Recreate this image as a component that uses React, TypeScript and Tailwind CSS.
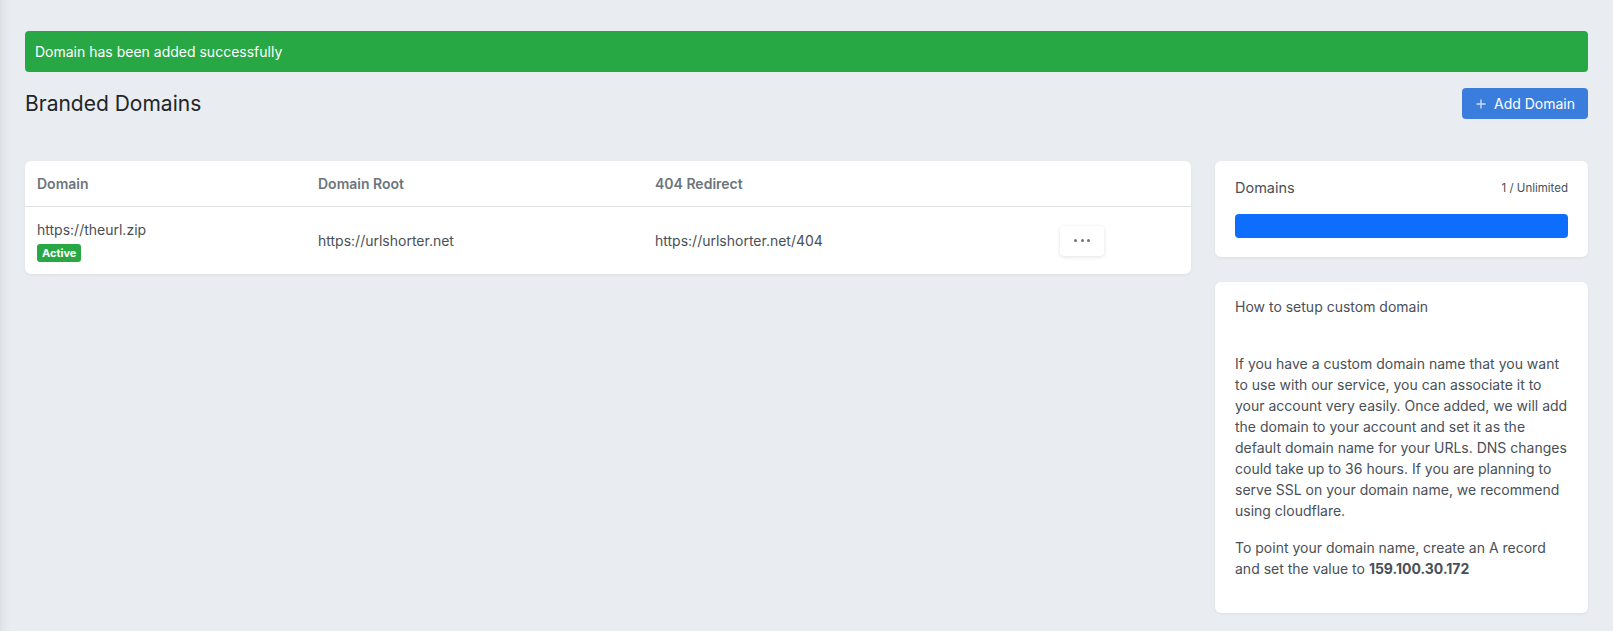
export default function App() {
  return (
    <div className="min-h-[631px] bg-[#e9ecf0] px-[25px] pt-[31px] pb-[18px] font-['Inter',sans-serif] text-[14px] leading-[21px] text-[#495057] shadow-[inset_12px_0_12px_-12px_rgba(0,0,0,0.10)]">
      <div className="rounded-[4px] bg-[#28a745] px-[10px] py-[10px] text-white">
        Domain has been added successfully
      </div>

      <div className="mt-[16px] flex items-center justify-between">
        <h1 className="text-[21px] font-normal leading-[30px] text-[#212529]">Branded Domains</h1>
        <button className="flex h-[31px] items-center gap-[8px] rounded-[4px] bg-[#3b7ddd] pl-[14px] pr-[13px] text-[14px] leading-[21px] text-white">
          <svg width="10" height="10" viewBox="0 0 10 10" fill="none" stroke="rgba(255,255,255,0.75)" strokeWidth="1.4">
            <path d="M5 0.5V9.5M0.5 5H9.5" />
          </svg>
          Add Domain
        </button>
      </div>

      <div className="mt-[42px] flex items-start gap-[24px]">
        <div className="w-[1166px] rounded-[6px] bg-white shadow-[0_1px_3px_rgba(0,0,0,0.06)]">
          <table className="w-full table-fixed border-collapse text-left">
            <colgroup>
              <col className="w-[281px]" />
              <col className="w-[337px]" />
              <col className="w-[405px]" />
              <col className="w-[143px]" />
            </colgroup>
            <thead>
              <tr className="border-b border-[#dee2e6]">
                <th className="px-[12px] py-[12px] font-semibold text-[#6c757d]">Domain</th>
                <th className="px-[12px] py-[12px] font-semibold text-[#6c757d]">Domain Root</th>
                <th className="px-[12px] py-[12px] font-semibold text-[#6c757d]">404 Redirect</th>
                <th className="px-[12px] py-[12px]"></th>
              </tr>
            </thead>
            <tbody>
              <tr>
                <td className="px-[12px] py-[12px] align-middle">
                  <div className="flex flex-col items-start gap-[4px]">
                    <span>https://theurl.zip</span>
                    <span className="h-[18px] rounded-[3px] bg-[#28a745] px-[5px] text-[11px] font-bold leading-[18px] text-white">
                      Active
                    </span>
                  </div>
                </td>
                <td className="px-[12px] py-[12px] align-middle">https://urlshorter.net</td>
                <td className="px-[12px] py-[12px] align-middle">https://urlshorter.net/404</td>
                <td className="px-[12px] py-[12px] align-middle">
                  <button className="flex h-[30px] w-[44px] items-center justify-center gap-[3.5px] rounded-[4px] bg-white shadow-[0_1px_4px_rgba(0,0,0,0.12)]">
                    <span className="h-[3px] w-[3px] rounded-full bg-[#6c757d]" />
                    <span className="h-[3px] w-[3px] rounded-full bg-[#6c757d]" />
                    <span className="h-[3px] w-[3px] rounded-full bg-[#6c757d]" />
                  </button>
                </td>
              </tr>
            </tbody>
          </table>
        </div>

        <div className="flex w-[373px] flex-col gap-[25px]">
          <div className="rounded-[6px] bg-white px-[20px] pt-[16px] pb-[19px] shadow-[0_1px_3px_rgba(0,0,0,0.06)]">
            <div className="flex items-center justify-between">
              <span className="text-[14.5px] leading-[22px]">Domains</span>
              <span className="text-[11.5px] leading-[18px]">1 / Unlimited</span>
            </div>
            <div className="mt-[15px] h-[24px] rounded-[4px] bg-[#0d6efd]" />
          </div>

          <div className="rounded-[6px] bg-white px-[20px] pt-[14px] pb-[18px] shadow-[0_1px_3px_rgba(0,0,0,0.06)]">
            <div>How to setup custom domain</div>
            <div className="mt-[36px]">
              <p className="mb-[16px]">
                If you have a custom domain name that you want to use with our service, you can associate it to your
                account very easily. Once added, we will add the domain to your account and set it as the default domain
                name for your URLs. DNS changes could take up to 36 hours. If you are planning to serve SSL on your domain
                name, we recommend using cloudflare.
              </p>
              <p className="mb-[16px]">
                To point your domain name, create an A record and set the value to{" "}
                <strong className="font-bold">159.100.30.172</strong>
              </p>
            </div>
          </div>
        </div>
      </div>
    </div>
  );
}
